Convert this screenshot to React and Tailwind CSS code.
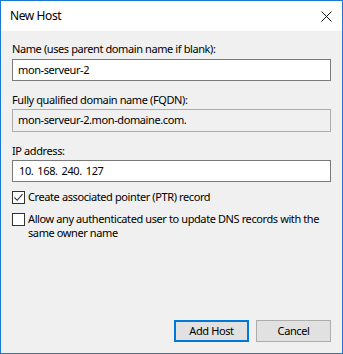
import React from "react";

const font = { fontFamily: '"Noto Sans", "Segoe UI", sans-serif', letterSpacing: "-0.4px" };

const TextBox = ({ value, readOnly, className = "" }) => (
    <div
        className={`flex items-center border px-[5px] text-black ${
            readOnly ? "border-[#adadad] bg-[#f0f0f0]" : "border-[#7a7a7a] bg-white"
        } ${className}`}
    >
        {value}
    </div>
);

const CheckBox = ({ checked }) => (
    <div className="flex h-[13px] w-[13px] shrink-0 items-center justify-center border border-[#333333] bg-white">
        {checked && (
            <svg width="11" height="11" viewBox="0 0 11 11">
                <path d="M1.5 5.5 L4.2 8.3 L9.5 2.2" fill="none" stroke="#333" strokeWidth="1.1" />
            </svg>
        )}
    </div>
);

export default function App() {
    return (
        <div
            className="flex h-[354px] w-[343px] flex-col border border-[#1a7ad0] bg-[#f0f0f0] text-[11px] text-black"
            style={font}
        >
            {/* TITLE BAR */}
            <div className="flex h-[30px] shrink-0 items-center justify-between bg-white pl-[9px] pr-[10px]">
                <span className="text-[12px] leading-none">New Host</span>
                <svg width="11" height="11" viewBox="0 0 11 11">
                    <path d="M0.5 0.5 L10.5 10.5 M10.5 0.5 L0.5 10.5" stroke="#111" strokeWidth="1" />
                </svg>
            </div>

            {/* BODY */}
            <div className="flex flex-1 flex-col px-[11px]">
                <label className="mt-[10px] leading-[16px]">Name (uses parent domain name if blank):</label>
                <TextBox value="mon-serveur-2" className="mt-[2px] h-[22px]" />

                <label className="mt-[11px] leading-[16px]">Fully qualified domain name (FQDN):</label>
                <TextBox value="mon-serveur-2.mon-domaine.com." readOnly className="mt-[1px] h-[23px]" />

                <label className="mt-[11px] leading-[16px]">IP address:</label>
                <TextBox
                    value={
                        <span className="flex gap-[4px] pl-[1px]">
                            <span>10.</span>
                            <span>168.</span>
                            <span>240.</span>
                            <span>127</span>
                        </span>
                    }
                    className="mt-[1px] h-[22px]"
                />

                <div className="mt-[7px] flex items-center gap-[3px] leading-[16px]">
                    <CheckBox checked />
                    <span>Create associated pointer (PTR) record</span>
                </div>
                <div className="mt-[7px] flex items-start gap-[3px] leading-[14px]">
                    <div className="mt-[1px]">
                        <CheckBox />
                    </div>
                    <span>Allow any authenticated user to update DNS records with the same owner name</span>
                </div>

                {/* BUTTONS */}
                <div className="mb-[11px] mt-auto flex justify-end gap-[7px]">
                    <button className="h-[22px] w-[75px] border-2 border-[#0078d7] bg-[#e1e1e1]">
                        Add Host
                    </button>
                    <button className="h-[22px] w-[75px] border border-[#adadad] bg-[#e1e1e1]">
                        Cancel
                    </button>
                </div>
            </div>
        </div>
    );
}
